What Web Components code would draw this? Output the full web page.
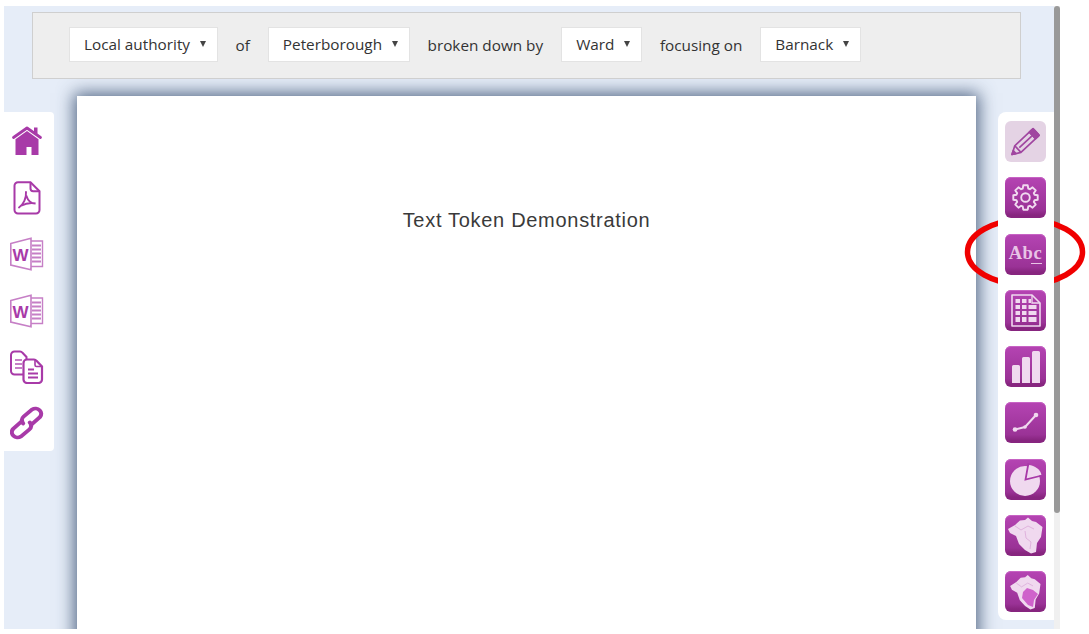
<!DOCTYPE html>
<html lang="en">
<head>
<meta charset="utf-8">
<title>Text Token Demonstration</title>
<style>
    html, body { margin: 0; padding: 0; background: #fff; }
    body { width: 1089px; height: 634px; overflow: hidden; font-family: "Open Sans", "Liberation Sans", sans-serif; }
</style>
</head>
<body>
<report-app>
    <filter-bar slot="top">
        <filter-select>Local authority</filter-select>
        <span>of</span>
        <filter-select>Peterborough</filter-select>
        <span>broken down by</span>
        <filter-select>Ward</filter-select>
        <span>focusing on</span>
        <filter-select>Barnack</filter-select>
    </filter-bar>
    <export-bar slot="left">
        <ui-icon name="home"></ui-icon>
        <ui-icon name="pdf"></ui-icon>
        <ui-icon name="word"></ui-icon>
        <ui-icon name="word"></ui-icon>
        <ui-icon name="copy"></ui-icon>
        <ui-icon name="link"></ui-icon>
    </export-bar>
    <report-card slot="card">Text Token Demonstration</report-card>
    <tool-bar slot="right">
        <tool-button pale><ui-icon name="pencil"></ui-icon></tool-button>
        <tool-button><ui-icon name="gear"></ui-icon></tool-button>
        <tool-button label="Abc"></tool-button>
        <tool-button><ui-icon name="table"></ui-icon></tool-button>
        <tool-button><ui-icon name="bars"></ui-icon></tool-button>
        <tool-button><ui-icon name="line"></ui-icon></tool-button>
        <tool-button><ui-icon name="pie"></ui-icon></tool-button>
        <tool-button><ui-icon name="map"></ui-icon></tool-button>
        <tool-button><ui-icon name="mapfocus"></ui-icon></tool-button>
    </tool-bar>
</report-app>

<script>
const PURPLE = '#a83aa8';
const PALE = '#f0d9ef';
const VEIN = '#dcaeda';

// gear outline with 8 teeth, centred on 20.5/20.5
function gearPath() {
    const pts = [];
    for (let i = 0; i < 8; i++) {
        const a = i * Math.PI / 4;
        [[-0.3, 9.4], [-0.18, 12.4], [0.18, 12.4], [0.3, 9.4]].forEach(([d, r]) => {
            pts.push(`${(20.5 + r * Math.sin(a + d)).toFixed(2)} ${(20.5 - r * Math.cos(a + d)).toFixed(2)}`);
        });
    }
    return 'M' + pts.join('L') + 'Z';
}

const MAP_SHAPE = 'M3 14 L10 10 L15 5.500 L20 5 L23 2.500 L27 6 L31 7 L37.500 12 L36 22 L32 28 L31 37 L26 38.500 L20 35 L14 29 L11 21 L5 18 Z';

const ICONS = {
    home: { box: 34, body: `
        <path d="M3.500 12.500 17 3l13.500 9.500" fill="none" stroke="${PURPLE}" stroke-width="2.800" stroke-linecap="round" stroke-linejoin="round"/>
        <path d="M24 2.500h3.500V9L24 7z" fill="${PURPLE}"/>
        <path d="M17 6 28.500 14.200V30H21.500V22H16.500V30H5.500V14.200z" fill="${PURPLE}"/>` },
    pdf: { box: 34, body: `
        <path d="M8 1.200H20.500L29.500 10.200V29A3.500 3.500 0 0 1 26 32.500H8A3.500 3.500 0 0 1 4.500 29V4.700A3.500 3.500 0 0 1 8 1.200Z" fill="#fff" stroke="${PURPLE}" stroke-width="2"/>
        <path d="M20.500 1.200V7.500A2.700 2.700 0 0 0 23.200 10.200H29.500" fill="none" stroke="${PURPLE}" stroke-width="2"/>
        <path d="M16 11C16.500 17 13.500 23.500 9 26.500M16.500 15C18 20 21 22.500 25.500 22.500C21 21.500 15.500 22.500 10.500 25" fill="none" stroke="${PURPLE}" stroke-width="1.900" stroke-linecap="round"/>` },
    word: { box: 34, body: `
        <path d="M21 4H32.500V29.500H21" fill="#fff" stroke="#c67fc6" stroke-width="1.400"/>
        <path d="M22 8.500H31M22 12.500H31M22 16.500H31M22 20.500H31M22 24.500H31" stroke="#c67fc6" stroke-width="2"/>
        <path d="M0.800 6.500 21 1.200V32.800L0.800 28Z" fill="#fff" stroke="#c67fc6" stroke-width="1.600"/>
        <text x="10.500" y="23.500" text-anchor="middle" font-family="Liberation Sans, sans-serif" font-weight="700" font-size="17" fill="${PURPLE}">W</text>` },
    copy: { box: 34, body: `
        <path d="M4.500 1.500H10A3 3 0 0 1 12.500 2.800L16.500 7V24.500H4.500A3.500 3.500 0 0 1 1 21V5A3.500 3.500 0 0 1 4.500 1.500Z" fill="#fff" stroke="${PURPLE}" stroke-width="2"/>
        <path d="M5 10H12M5 14H12M5 18H12" stroke="#c67fc6" stroke-width="1.800"/>
        <path d="M17 9.500H24A3 3 0 0 1 26.500 10.800L32 16.500V29.500A3.500 3.500 0 0 1 28.500 33H17A3.500 3.500 0 0 1 13.500 29.500V13A3.500 3.500 0 0 1 17 9.500Z" fill="#fff" stroke="${PURPLE}" stroke-width="2.200"/>
        <path d="M25 9.500V15A1.500 1.500 0 0 0 26.500 16.500H32" fill="none" stroke="${PURPLE}" stroke-width="1.600"/>
        <path d="M18 19.500H24M18 23.500H28M18 27.500H28" stroke="${PURPLE}" stroke-width="1.800"/>` },
    link: { box: 34, body: `
        <g transform="translate(16.500 17) scale(1.120 1) translate(-17 -17)" fill="none" stroke="${PURPLE}" stroke-width="3.700" stroke-linecap="round">
            <path d="M13 15 5 23A5.200 5.200 0 0 0 12 30.500L19.500 23.500A5.200 5.200 0 0 0 20 16.500"/>
            <path d="M21 19 29 11A5.200 5.200 0 0 0 22 3.500L14.500 10.500A5.200 5.200 0 0 0 14 17.500"/>
        </g>` },
    pencil: { box: 41, body: `
        <g transform="translate(7 33.500) rotate(-43)" fill="none" stroke="#a046a0" stroke-width="1.700" stroke-linejoin="round">
            <path d="M0 0 8 -4.500H31.500A1.500 1.500 0 0 1 33 -3V3A1.500 1.500 0 0 1 31.500 4.500H8Z"/>
            <path d="M8 -4.500V4.500M28 -4.500V4.500M10 0H27"/>
            <path d="M0 0 3.500 -2V2Z" fill="#a046a0"/>
            <path d="M28 -4.500H33V4.500H28Z" fill="#a046a0"/>
        </g>` },
    gear: { box: 41, body: `
        <path d="${gearPath()}" fill="none" stroke="${PALE}" stroke-width="1.900" stroke-linejoin="round"/>
        <circle cx="20.500" cy="20.500" r="4.300" fill="none" stroke="${PALE}" stroke-width="1.900"/>` },
    table: { box: 41, body: `
        <path d="M7 5H27L35 13V36H7Z" fill="none" stroke="${PALE}" stroke-width="1.600" stroke-linejoin="round"/>
        <path d="M27 5V13H35" fill="none" stroke="${PALE}" stroke-width="1.300"/>
        <path d="M10.500 9h4.500v4h-4.500zM17 9h4.500v4H17zM23.500 9h2.500v4h-2.500zM10.500 15h4.500v4h-4.500zM17 15h4.500v4H17zM23.500 15h8v4h-8zM10.500 21h4.500v4h-4.500zM17 21h4.500v4H17zM23.500 21h8v4h-8zM10.500 27h4.500v5h-4.500zM17 27h4.500v5H17zM23.500 27h8v5h-8z" fill="${PALE}"/>` },
    bars: { box: 41, body: `
        <path d="M7 20.500a1.500 1.500 0 0 1 1.500-1.500h5a1.500 1.500 0 0 1 1.500 1.500V37H7zM17 12.500a1.500 1.500 0 0 1 1.500-1.500h5a1.500 1.500 0 0 1 1.500 1.500V37h-8zM27 6.500a1.500 1.500 0 0 1 1.500-1.500h5a1.500 1.500 0 0 1 1.500 1.500V37h-8z" fill="${PALE}"/>` },
    line: { box: 41, body: `
        <path d="M10 27.500 20 25 31 13" fill="none" stroke="${PALE}" stroke-width="2"/>
        <circle cx="10" cy="27.500" r="2.300" fill="${PALE}"/>
        <circle cx="20" cy="25" r="1.800" fill="${PALE}"/>
        <circle cx="31" cy="13" r="2.300" fill="${PALE}"/>` },
    pie: { box: 41, body: `
        <circle cx="20" cy="22" r="15" fill="${PALE}"/>
        <path d="M23.500 6C30 6.500 35.500 10.500 36.500 16L21 19.500Z" fill="${PALE}"/>
        <path d="M23.500 4 20.500 20.500 39 16" fill="none" stroke="#a83aa8" stroke-width="1.800"/>` },
    map: { box: 41, body: `
        <path d="${MAP_SHAPE}" fill="${PALE}"/>
        <path d="M10 11 16 15 23 11 29 14M20 16 21 23 26 27 25 34" fill="none" stroke="${VEIN}" stroke-width="0.900"/>` },
    mapfocus: { box: 41, body: `
        <g transform="translate(2.500 1.500) scale(0.88 0.96)">
            <path d="${MAP_SHAPE}" fill="${PALE}"/>
            <path d="M10 11 16 15 23 11 29 14" fill="none" stroke="${VEIN}" stroke-width="0.900"/>
        </g>
        <path d="M22 17 28 19 33 23 29 29 28 36 23 34 17 27 18 21Z" fill="#cf62cb"/>` }
};

class UiIcon extends HTMLElement {
    connectedCallback() {
        const icon = ICONS[this.getAttribute('name')];
        this.attachShadow({ mode: 'open' }).innerHTML = `
        <style>
            :host { display: block; width: ${icon.box}px; height: ${icon.box}px; }
            svg { display: block; }
        </style>
        <svg width="${icon.box}" height="${icon.box}" viewBox="0 0 ${icon.box} ${icon.box}">${icon.body}</svg>`;
    }
}

class FilterSelect extends HTMLElement {
    constructor() {
        super();
        this.attachShadow({ mode: 'open' }).innerHTML = `
        <style>
            :host {
                display: flex;
                align-items: center;
                box-sizing: border-box;
                height: 35px;
                padding: 0 10.500px 1px 14px;
                background: #fff;
                border: 1px solid #e3e3e3;
            }
            .caret { margin-left: 10px; width: 0; height: 0; border: 3.500px solid transparent; border-top: 6px solid #444; border-bottom: 0; }
        </style>
        <slot></slot><span class="caret"></span>`;
    }
}

class FilterBar extends HTMLElement {
    constructor() {
        super();
        this.attachShadow({ mode: 'open' }).innerHTML = `
        <style>
            :host {
                display: flex;
                align-items: center;
                gap: 18px;
                box-sizing: border-box;
                height: 67px;
                margin: 6px 33px 0 28px;
                padding: 0 0 2px 36px;
                background: #eeeeee;
                border: 1px solid #cfcfcf;
                color: #333;
                font: 15.300px "Open Sans", "Liberation Sans", sans-serif;
            }
        </style>
        <slot></slot>`;
    }
}

class ExportBar extends HTMLElement {
    constructor() {
        super();
        this.attachShadow({ mode: 'open' }).innerHTML = `
        <style>
            :host {
                display: flex;
                flex-direction: column;
                align-items: center;
                gap: 22.200px;
                box-sizing: border-box;
                position: relative;
                z-index: 1;
                width: 50px;
                height: 339px;
                margin-top: 33px;
                padding: 13px 4px 0 0;
                background: #fff;
                border-radius: 0 4px 4px 0;
            }
        </style>
        <slot></slot>`;
    }
}

class ToolBar extends HTMLElement {
    constructor() {
        super();
        this.attachShadow({ mode: 'open' }).innerHTML = `
        <style>
            :host {
                display: flex;
                flex-direction: column;
                gap: 15.250px;
                box-sizing: border-box;
                position: relative;
                z-index: 1;
                width: 56px;
                height: 508px;
                margin-top: 33px;
                padding: 9px 0 0 7px;
                background: #fff;
                border-radius: 8px 0 0 8px;
            }
        </style>
        <slot></slot>`;
    }
}

class ToolButton extends HTMLElement {
    connectedCallback() {
        const label = this.getAttribute('label');
        this.attachShadow({ mode: 'open' }).innerHTML = `
        <style>
            :host {
                display: block;
                box-sizing: border-box;
                position: relative;
                width: 41px;
                height: 41px;
                border-radius: 6px;
                background: linear-gradient(#b544b3, #9a3296 80%, #87257f 93%);
                box-shadow: inset 0 1px 0 #c763c4;
                overflow: hidden;
            }
            :host([pale]) { background: #e4d3e4; box-shadow: none; }
            .abc {
                display: block;
                margin-top: 9px;
                text-align: center;
                font: 700 18.500px "Liberation Serif", serif;
                letter-spacing: 0.6px;
                line-height: 20px;
                color: #e8c4e6;
            }
            .rule { position: absolute; left: 26px; top: 29px; width: 11px; height: 1px; background: #e8c4e6; }
        </style>
        ${label ? `<span class="abc">${label}</span><span class="rule"></span>` : '<slot></slot>'}`;
    }
}

class ReportCard extends HTMLElement {
    constructor() {
        super();
        this.attachShadow({ mode: 'open' }).innerHTML = `
        <style>
            :host {
                display: block;
                box-sizing: border-box;
                width: 899px;
                height: 560px;
                margin: 17px 22px 0 23px;
                padding-top: 111px;
                background: #fff;
                box-shadow: 0 0 16px 3px rgba(60, 82, 115, 0.85);
                text-align: center;
                color: #3a3a3a;
                font: 20px/26px "Liberation Sans", Arial, sans-serif;
                letter-spacing: 0.7px;
            }
        </style>
        <slot></slot>`;
    }
}

class ReportApp extends HTMLElement {
    constructor() {
        super();
        this.attachShadow({ mode: 'open' }).innerHTML = `
        <style>
            :host { display: block; position: relative; width: 1089px; height: 634px; }
            .frame { display: flex; width: 1056px; height: 623px; margin-left: 4px; position: relative; top: 6px; background: #e6edf8; }
            .main { display: flex; flex-direction: column; width: 1050px; }
            .row { display: flex; align-items: flex-start; flex: 1; min-height: 0; overflow: hidden; }
            .rail { width: 6px; background: #f0f0f0; }
            .thumb { height: 507px; background: #999; border-radius: 3px; }
            .mark { position: absolute; left: 964px; top: 215px; }
        </style>
        <div class="frame">
            <div class="main">
                <slot name="top"></slot>
                <div class="row">
                    <slot name="left"></slot>
                    <slot name="card"></slot>
                    <slot name="right"></slot>
                </div>
            </div>
            <div class="rail"><div class="thumb"></div></div>
        </div>
        <svg class="mark" width="123" height="76" viewBox="0 0 123 76">
            <ellipse cx="61" cy="37" rx="57.500" ry="32.500" fill="none" stroke="#f00000" stroke-width="5.500"/>
        </svg>`;
    }
}

customElements.define('ui-icon', UiIcon);
customElements.define('filter-select', FilterSelect);
customElements.define('filter-bar', FilterBar);
customElements.define('export-bar', ExportBar);
customElements.define('tool-bar', ToolBar);
customElements.define('tool-button', ToolButton);
customElements.define('report-card', ReportCard);
customElements.define('report-app', ReportApp);
</script>
</body>
</html>
